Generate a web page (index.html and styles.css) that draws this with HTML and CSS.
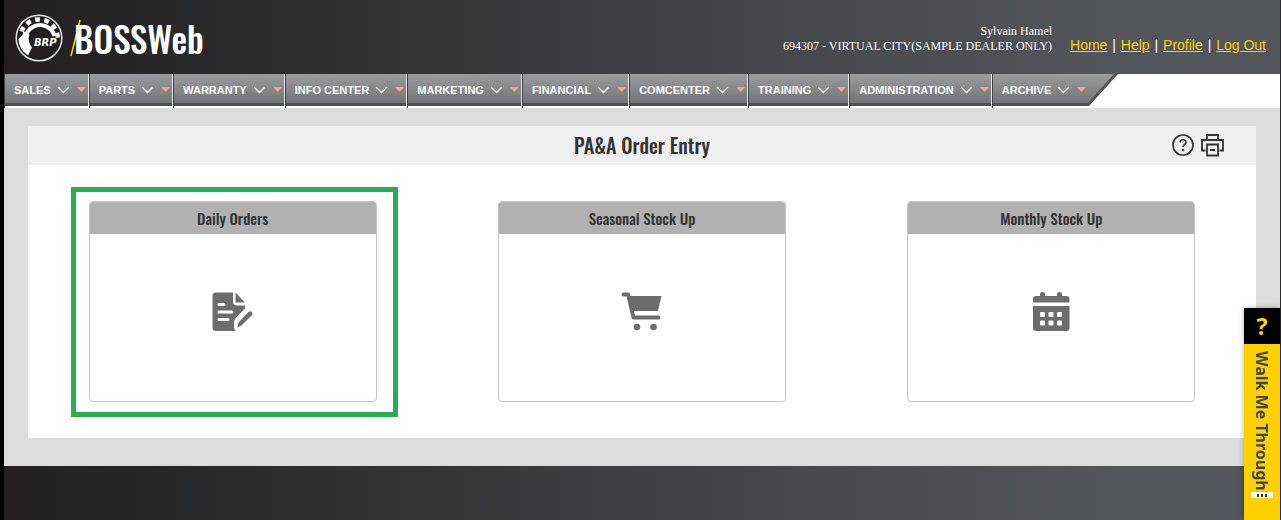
FILE: index.html
```html
<!DOCTYPE html>
<html lang="en">
<head>
    <meta charset="UTF-8">
    <meta name="viewport" content="width=device-width, initial-scale=1.0">
    <title>BOSSWeb - PA&amp;A Order Entry</title>
    <link rel="stylesheet" href="styles.css">
</head>
<body>
    <svg class="defs" aria-hidden="true">
        <symbol id="chevron" viewBox="0 0 29 8">
            <path d="M1 1l5.500 5.500L12 1" fill="none" stroke="#fff" stroke-width="1.300"/>
            <path d="M20 1h9l-4.500 5z" fill="#f0a58c"/>
        </symbol>
    </svg>

    <header class="header">
        <a class="logo" href="#">
            <svg class="gear" viewBox="0 0 48 48" role="img" aria-label="BRP">
                <circle cx="24" cy="24" r="22.800" fill="#231f20" stroke="#e4e4e4" stroke-width="1.500"/>
                <path d="M13 35A15 15 0 1 1 39.500 22" fill="none" stroke="#fff" stroke-width="4"/>
                <path d="M3.500 25q0 10 9.500 16.500l4-8q-5-6-2.500-13L8 17q1 4-4.500 8z" fill="#fff"/>
                <path d="M6.500 17.500A18.700 18.700 0 0 1 42.700 24" fill="none" stroke="#fff" stroke-width="4.500" stroke-dasharray="4.800 4.500"/>
                <text x="19" y="32" class="gear-text">BRP</text>
            </svg>
            <svg class="slash" viewBox="0 0 12 38" aria-hidden="true">
                <path d="M1 37L10 1" stroke="#fdd20e" stroke-width="1.500"/>
            </svg>
            <span class="logo-text">BOSSWeb</span>
        </a>
        <div class="dealer">
            <div>Sylvain Hamel</div>
            <div>694307 - VIRTUAL CITY(SAMPLE DEALER ONLY)</div>
        </div>
        <div class="links">
            <a href="#">Home</a> | <a href="#">Help</a> | <a href="#">Profile</a> | <a href="#">Log Out</a>
        </div>
    </header>

    <nav class="menu">
        <a href="#">SALES <svg><use href="#chevron"/></svg></a>
        <a href="#">PARTS <svg><use href="#chevron"/></svg></a>
        <a href="#">WARRANTY <svg><use href="#chevron"/></svg></a>
        <a href="#">INFO CENTER <svg><use href="#chevron"/></svg></a>
        <a href="#">MARKETING <svg><use href="#chevron"/></svg></a>
        <a href="#">FINANCIAL <svg><use href="#chevron"/></svg></a>
        <a href="#">COMCENTER <svg><use href="#chevron"/></svg></a>
        <a href="#">TRAINING <svg><use href="#chevron"/></svg></a>
        <a href="#">ADMINISTRATION <svg><use href="#chevron"/></svg></a>
        <a href="#">ARCHIVE <svg><use href="#chevron"/></svg></a>
        <svg class="menu-end" viewBox="0 0 30 32" aria-hidden="true">
            <defs>
                <linearGradient id="endFill" x1="0" y1="0" x2="0" y2="1">
                    <stop offset="0" stop-color="#9a9c9e"/>
                    <stop offset="1" stop-color="#737476"/>
                </linearGradient>
            </defs>
            <path d="M0 0h30L1 32H0z" fill="#515256"/>
            <path d="M0 0h26L0 29z" fill="url(#endFill)"/>
        </svg>
    </nav>

    <main class="content">
        <section class="panel">
            <div class="title-bar">
                <h1>PA&amp;A Order Entry</h1>
                <div class="tools">
                    <button type="button" aria-label="Help">
                        <svg viewBox="0 0 24 24">
                            <circle cx="12" cy="12" r="10" fill="none" stroke="#333" stroke-width="1.700"/>
                            <path d="M9.200 9.600c0-3.700 5.800-3.700 5.800-.4 0 2.200-2.900 2.200-2.900 4.800" fill="none" stroke="#333" stroke-width="1.700"/>
                            <circle cx="12.100" cy="17" r="1.200" fill="#333"/>
                        </svg>
                    </button>
                    <button type="button" aria-label="Print">
                        <svg viewBox="0 0 24 24" fill="none" stroke="#333" stroke-width="1.800">
                            <path d="M7 6V2h11v4M5.500 17.500H2V7h21v10.500h-3.500M7 11.500h11V22.500H7zM10 17h5"/>
                        </svg>
                    </button>
                </div>
            </div>
            <div class="cards">
                <a class="card selected" href="#">
                    <h2>Daily Orders</h2>
                    <svg viewBox="0 0 42 40" fill="#6d6d6d">
                        <path d="M4 0.500h17v9q0 4 4 4h8v3l-8.500 8.500q-2.500 3-2.500 6v4q0 3 2.500 4H4q-3.500 0-3.500-3.500V4q0-3.500 3.500-3.500z"/>
                        <path d="M23.500 0.500l9.500 10h-9.500z"/>
                        <path d="M25.500 35.500l1-5L36.500 20q1.800-1.500 3.300 0t0 3.300L29.500 33.500z"/>
                        <path d="M7 12.500h5M7 20h13M7 27.500h9" stroke="#fff" stroke-width="3" stroke-linecap="round"/>
                    </svg>
                </a>
                <a class="card" href="#">
                    <h2>Seasonal Stock Up</h2>
                    <svg viewBox="0 0 42 40" fill="#6d6d6d">
                        <path d="M2.500 2.500h4.500L12.500 25.500h25" fill="none" stroke="#6d6d6d" stroke-width="3.800" stroke-linecap="round" stroke-linejoin="round"/>
                        <path d="M7 4h33.500L37 19H12z"/>
                        <circle cx="16" cy="35" r="3.300"/>
                        <circle cx="32.500" cy="35" r="3.300"/>
                    </svg>
                </a>
                <a class="card" href="#">
                    <h2>Monthly Stock Up</h2>
                    <svg viewBox="0 0 42 40" fill="#6d6d6d">
                        <path d="M3 10.500V7q0-3 3-3h4V2q0-2 2.500-2T15 2v2h12V2q0-2 2.500-2T32 2v2h4.500q3 0 3 3v3.500z"/>
                        <path d="M3 14h36.500v22q0 3-3 3H6q-3 0-3-3z"/>
                        <g fill="#fff">
                            <rect x="10" y="20" width="5" height="5" rx="1"/>
                            <rect x="18.500" y="20" width="5" height="5" rx="1"/>
                            <rect x="27" y="20" width="5" height="5" rx="1"/>
                            <rect x="10" y="28.500" width="5" height="5" rx="1"/>
                            <rect x="18.500" y="28.500" width="5" height="5" rx="1"/>
                            <rect x="27" y="28.500" width="5" height="5" rx="1"/>
                        </g>
                    </svg>
                </a>
            </div>
        </section>
    </main>

    <button type="button" class="walkme">
        <span class="walkme-icon">?</span>
        <span class="walkme-text">Walk Me Through!</span>
        <span class="walkme-dots"><i></i><i></i><i></i></span>
    </button>
</body>
</html>
```
FILE: styles.css
```css
* {
    box-sizing: border-box;
}
body {
    margin: 0;
    min-height: 100vh;
    border-left: 4px solid #000;
    border-right: 1px solid #2b2b2d;
    background: linear-gradient(to right, #231f20, #28292a 16%, #47484c 62%, #53565a 88%);
    font-family: "Liberation Sans", Arial, sans-serif;
}
.defs {
    display: none;
}

/* header */
.header {
    display: flex;
    align-items: flex-end;
    height: 74px;
    padding: 0 13px 12px 11px;
    color: #fff;
}
.logo {
    display: flex;
    align-items: center;
    margin-right: auto;
    color: #fff;
    text-decoration: none;
}
.gear {
    width: 48px;
    height: 48px;
}
.gear-text {
    fill: #fff;
    font: italic bold 10px "DejaVu Sans", Verdana, sans-serif;
}
.slash {
    width: 12px;
    height: 38px;
    margin-left: 7px;
}
.logo-text {
    margin-left: -8px;
    font: 500 35px/44px "Oswald", "Roboto Condensed", "Liberation Sans Narrow", "Arial Narrow", sans-serif;
}
.dealer {
    margin: 0 17px 8px 0;
    font: 12px/15px "Liberation Serif", "Times New Roman", serif;
    text-align: right;
}
.links {
    margin-bottom: 8px;
    font-size: 14px;
    line-height: 18px;
}
.links a {
    margin: 0 1px;
    color: #fdd20e;
}

/* main menu */
.menu {
    display: flex;
    height: 34px;
    background: #fff;
}
.menu a {
    display: flex;
    align-items: center;
    gap: 6px;
    padding: 0 2px 2px 9px;
    border-left: 1px solid #3f4043;
    border-right: 1px solid #e8e8e8;
    background: linear-gradient(#9a9c9e, #737476 29px, #515256 29px, #515256 32px, #fff 32px);
    color: #fff;
    font-size: 11px;
    font-weight: bold;
    text-decoration: none;
    white-space: nowrap;
}
.menu a:last-of-type {
    border-right: none;
}
.menu a svg {
    width: 29px;
    height: 8px;
}
.menu-end {
    width: 30px;
    height: 32px;
}

/* content */
.content {
    padding: 18px 24px 28px;
    background: #dcdcdc;
}
.panel {
    background: #fff;
}
.title-bar {
    display: grid;
    grid-template-columns: 1fr auto 1fr;
    align-items: center;
    height: 39px;
    padding: 0 32px 2px;
    background: #efefef;
}
.title-bar h1 {
    grid-column: 2;
    margin: 0;
    color: #333;
    font: 500 20px/30px "Oswald", "Roboto Condensed", "Liberation Sans Narrow", "Arial Narrow", sans-serif;
}
.tools {
    display: flex;
    justify-content: flex-end;
    gap: 5px;
}
.tools button {
    padding: 0;
    border: none;
    background: none;
    cursor: pointer;
}
.tools svg {
    display: block;
    width: 24px;
    height: 24px;
}
.cards {
    display: grid;
    grid-template-columns: repeat(3, 1fr);
    justify-items: center;
    padding: 36px 0;
}
.card {
    position: relative;
    display: flex;
    flex-direction: column;
    align-items: center;
    width: 288px;
    max-width: 80%;
    height: 201px;
    border: 1px solid #c4c4c4;
    border-radius: 4px;
    text-decoration: none;
}
.card h2 {
    align-self: stretch;
    margin: 0;
    border-radius: 3px 3px 0 0;
    background: #b1b1b1;
    color: #333;
    font: 500 15px/32px "Oswald", "Roboto Condensed", "Liberation Sans Narrow", "Arial Narrow", sans-serif;
    text-align: center;
}
.card svg {
    width: 42px;
    height: 40px;
    margin-top: 58px;
}
.selected::after {
    content: "";
    position: absolute;
    inset: -15px -22px -16px -19px;
    border: 5px solid #27ae50;
}

/* walkme tab */
.walkme {
    position: fixed;
    right: 1px;
    bottom: 0;
    display: flex;
    flex-direction: column;
    align-items: center;
    width: 36px;
    height: 212px;
    padding: 0;
    border: none;
    background: #fdd000;
    box-shadow: 0 0 5px rgba(0, 0, 0, 0.3);
    cursor: pointer;
}
.walkme-icon {
    width: 100%;
    background: #000;
    color: #fdd20e;
    font: bold 24px/36px "Noto Sans", "Open Sans", sans-serif;
}
.walkme-text {
    margin-top: 7px;
    color: #444;
    font: bold 16px/24px "Noto Sans", "Open Sans", sans-serif;
    writing-mode: vertical-rl;
}
.walkme-dots {
    position: absolute;
    top: 184px;
    display: flex;
    justify-content: center;
    align-items: center;
    gap: 2px;
    width: 22px;
    height: 6px;
    background: #fff;
}
.walkme-dots i {
    width: 2px;
    height: 3px;
    background: #333;
}
```
